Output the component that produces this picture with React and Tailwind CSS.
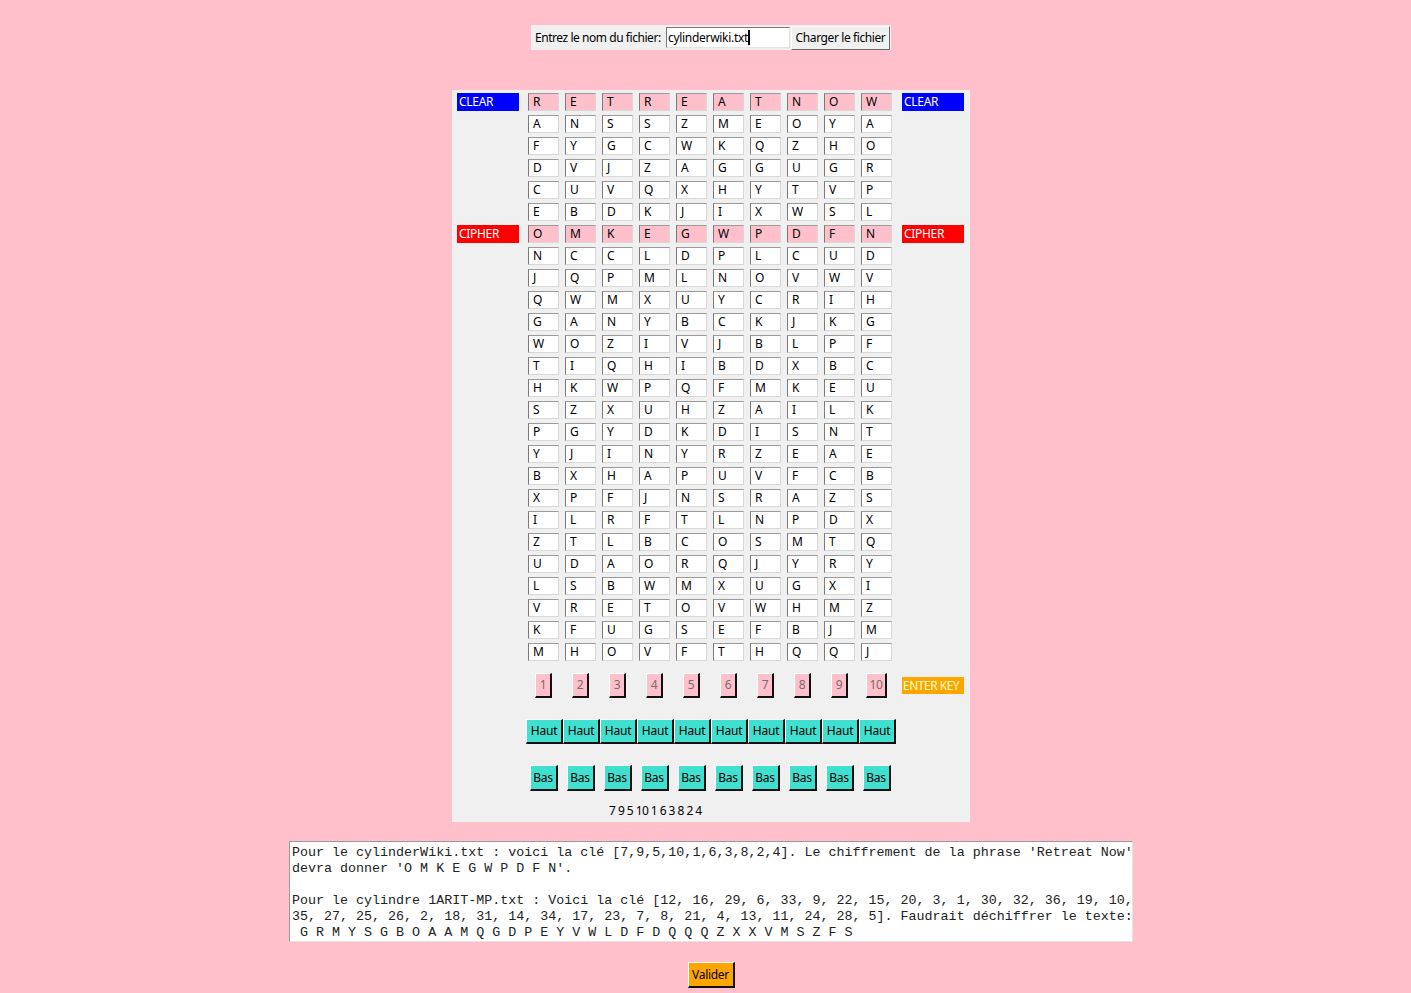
import React from "react";

const ROWS = [
  "RETREATNOW",
  "ANSSZMEOYA",
  "FYGCWKQZHO",
  "DVJZAGGUGR",
  "CUVQXHYTVP",
  "EBDKJIXWSL",
  "OMKEGWPDFN",
  "NCCLDPLCUD",
  "JQPMLNOVWV",
  "QWMXUYCRIH",
  "GANYBCKJKG",
  "WOZIVJBLPF",
  "TIQHIBDXBC",
  "HKWPQFMKEU",
  "SZXUHZAILK",
  "PGYDKDISNT",
  "YJINYRZEAE",
  "BXHAPUVFCB",
  "XPFJNSRAZS",
  "ILRFTLNPDX",
  "ZTLBCOSMTQ",
  "UDAORQJYRY",
  "LSBWMXUGXI",
  "VRETOVWHMZ",
  "KFUGSEFBJM",
  "MHOVFTHQQJ",
];

const ui = { fontFamily: '"Noto Sans", "Open Sans", sans-serif' };
const mono = { fontFamily: '"Liberation Mono", "DejaVu Sans Mono", monospace' };

function Cell({ ch, pink }) {
  return (
    <div
      className={`w-[31px] h-[18px] flex items-center pl-[4px] text-[12px] leading-none text-black border border-t-[#9a9a9a] border-l-[#7a7a7a] border-r-[#d8d8d8] border-b-[#d8d8d8] ${
        pink ? "bg-[#ffc0cb]" : "bg-white"
      }`}
    >
      {ch}
    </div>
  );
}

function SideLabel({ text, color }) {
  return (
    <div
      className={`w-[62px] h-[18px] flex items-center pl-[2px] text-[12px] leading-none tracking-[-0.3px] text-white ${color}`}
    >
      {text}
    </div>
  );
}

const raised =
  "border-t border-l border-t-white border-l-white border-r-2 border-b-2 border-r-[#101010] border-b-[#101010]";

export default function App() {
  const cols = Array.from({ length: 10 }, (_, i) => i);
  return (
    <div className="min-h-[993px] w-full bg-[#ffc0cb] pl-[11px] flex flex-col items-center" style={ui}>
      {/* top file frame */}
      <div className="mt-[25px] w-[360px] h-[25px] bg-[#f0f0f0] flex items-center pl-[4px]">
        <span className="shrink-0 text-[12px] text-black leading-none tracking-[-0.45px] w-[131px] whitespace-nowrap">
          Entrez le nom du fichier:
        </span>
        <div className="shrink-0 w-[124px] h-[21px] bg-white border border-t-[#7a7a7a] border-l-[#7a7a7a] border-r-[#e3e3e3] border-b-[#e3e3e3] flex items-center pl-[1px] text-[12px] leading-none tracking-[-0.3px] text-black">
          cylinderwiki.txt
          <span className="inline-block w-[2px] h-[15px] bg-black" />
        </div>
        <div className="shrink-0 ml-[1px] w-[99px] h-[24px] bg-[#f0f0f0] border border-t-white border-l-white border-r-[#6a6a6a] border-b-[#6a6a6a] flex items-center justify-center text-[12px] leading-none tracking-[-0.4px] text-black whitespace-nowrap">
          Charger le fichier
        </div>
      </div>

      {/* main panel */}
      <div className="mt-[40px] w-[518px] bg-[#f0f0f0] pt-[3px] pl-[5px] pb-[3px]">
        <div className="flex flex-col gap-[4px]">
          {ROWS.map((row, r) => {
            const special = r === 0 || r === 6;
            return (
              <div key={r} className="flex h-[18px]">
                {r === 0 ? (
                  <SideLabel text="CLEAR" color="bg-[#0000ff]" />
                ) : r === 6 ? (
                  <SideLabel text="CIPHER" color="bg-[#ff0000]" />
                ) : (
                  <div className="w-[62px]" />
                )}
                <div className="ml-[9px] flex gap-[6px]">
                  {row.split("").map((ch, c) => (
                    <Cell key={c} ch={ch} pink={special} />
                  ))}
                </div>
                <div className="ml-[10px]">
                  {r === 0 ? (
                    <SideLabel text="CLEAR" color="bg-[#0000ff]" />
                  ) : r === 6 ? (
                    <SideLabel text="CIPHER" color="bg-[#ff0000]" />
                  ) : null}
                </div>
              </div>
            );
          })}
        </div>

        {/* number buttons */}
        <div className="mt-[12px] flex h-[25px]">
          <div className="w-[62px]" />
          <div className="ml-[9px] flex gap-[6px]">
            {cols.map((i) => (
              <div key={i} className="w-[31px] flex justify-center">
                <div
                  className={`${i === 9 ? "w-[21px]" : "w-[17px]"} h-[25px] bg-[#ffc0cb] ${raised} flex items-center justify-center text-[12px] leading-none tracking-[-0.3px] text-[#7a6a6e]`}
                >
                  {i + 1}
                </div>
              </div>
            ))}
          </div>
          <div className="ml-[10px] flex items-center">
            <div className="w-[62px] h-[17px] bg-[#ffa500] flex items-center pl-[1px] text-[12px] leading-none tracking-[-0.5px] text-[#ffffc8] whitespace-nowrap overflow-hidden">
              ENTER KEY
            </div>
          </div>
        </div>

        {/* Haut row */}
        <div className="mt-[21px] flex h-[25px]">
          <div className="w-[69px]" />
          <div className="flex">
            {cols.map((i) => (
              <div
                key={i}
                className={`w-[37px] h-[25px] bg-[#40e0d0] ${raised} flex items-center justify-center text-[12px] leading-none tracking-[-0.2px] text-black`}
              >
                Haut
              </div>
            ))}
          </div>
        </div>

        {/* Bas row */}
        <div className="mt-[21px] flex h-[26px]">
          <div className="w-[62px]" />
          <div className="ml-[9px] flex gap-[6px]">
            {cols.map((i) => (
              <div key={i} className="w-[31px] flex justify-center">
                <div
                  className={`w-[28px] h-[26px] bg-[#40e0d0] ${raised} flex items-center justify-center text-[12px] leading-none tracking-[-0.2px] text-black`}
                >
                  Bas
                </div>
              </div>
            ))}
          </div>
        </div>

        <div className="mt-[12px] h-[16px] ml-[152px] text-[12px] leading-[16px] text-black tracking-[-0.55px] whitespace-nowrap">
          7 9 5 10 1 6 3 8 2 4
        </div>
      </div>

      {/* text area */}
      <div
        className="mt-[19px] w-[844px] h-[101px] bg-white border border-t-[#9a9a9a] border-l-[#9a9a9a] border-r-[#e3e3e3] border-b-[#e3e3e3] pt-[3px] pl-[2px] text-[13.35px] leading-[16px] text-[#222] whitespace-pre"
        style={mono}
      >
        {"Pour le cylinderWiki.txt : voici la clé [7,9,5,10,1,6,3,8,2,4]. Le chiffrement de la phrase 'Retreat Now'\n" +
          "devra donner 'O M K E G W P D F N'.\n" +
          "\n" +
          "Pour le cylindre 1ARIT-MP.txt : Voici la clé [12, 16, 29, 6, 33, 9, 22, 15, 20, 3, 1, 30, 32, 36, 19, 10,\n" +
          "35, 27, 25, 26, 2, 18, 31, 14, 34, 17, 23, 7, 8, 21, 4, 13, 11, 24, 28, 5]. Faudrait déchiffrer le texte:\n" +
          " G R M Y S G B O A A M Q G D P E Y V W L D F D Q Q Q Z X X V M S Z F S"}
      </div>

      {/* Valider */}
      <div
        className={`mt-[20px] w-[47px] h-[26px] bg-[#ffa500] ${raised} flex items-center justify-center text-[12px] leading-none tracking-[-0.3px] text-black`}
      >
        Valider
      </div>
    </div>
  );
}
